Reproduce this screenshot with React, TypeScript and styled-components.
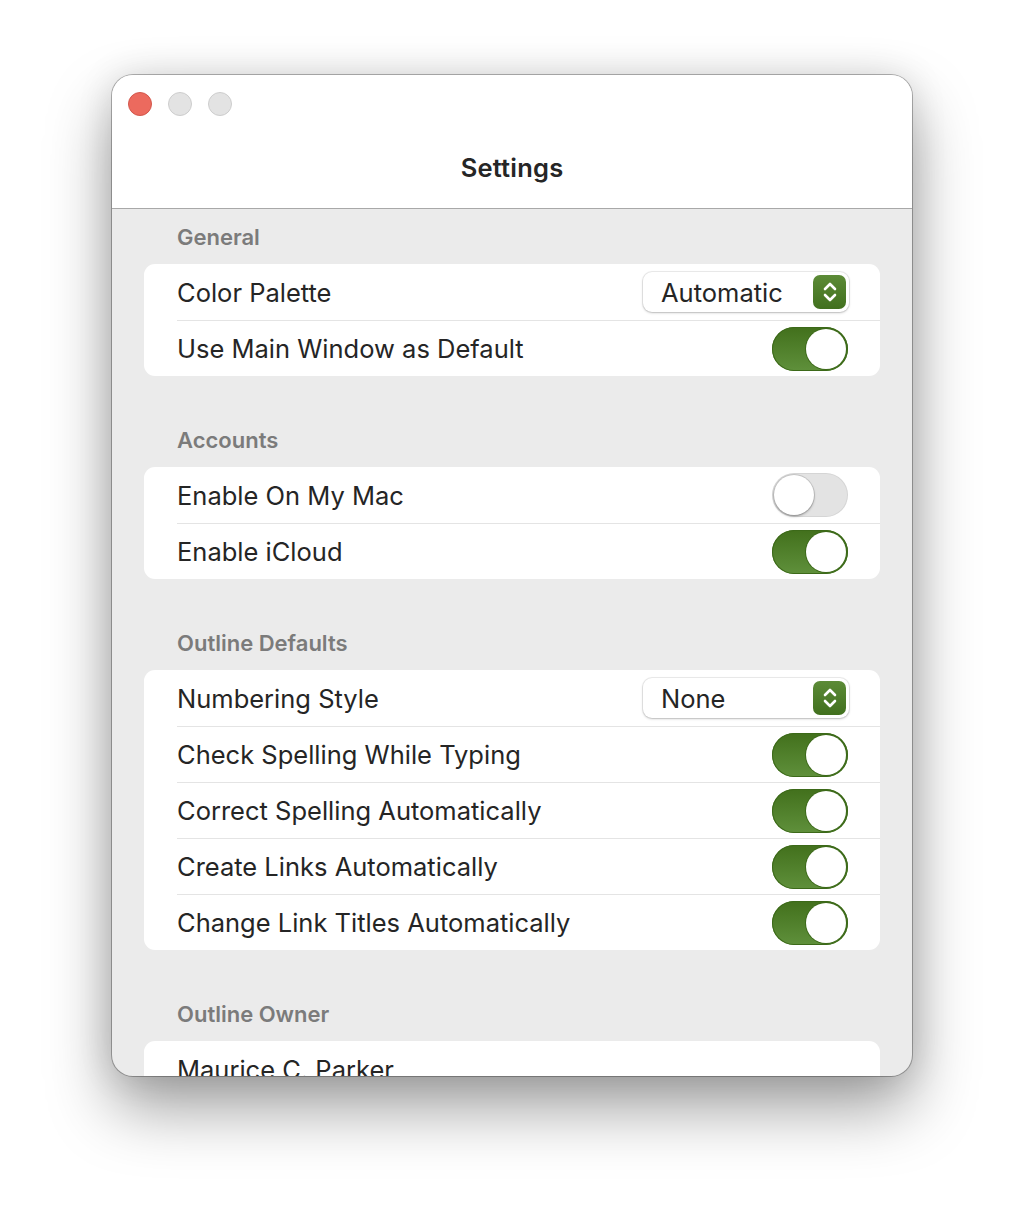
import React from "react";
import styled, { createGlobalStyle } from "styled-components";

const Global = createGlobalStyle`
  html, body { margin: 0; padding: 0; background: #ffffff; }
  body { font-family: Inter, "Noto Sans", "Liberation Sans", sans-serif; -webkit-font-smoothing: antialiased; }
  * { box-sizing: border-box; }
`;

const Page = styled.div`
  width: 1024px;
  height: 1224px;
  padding: 75px 112px 0;
  background: #ffffff;
`;

const Window = styled.div`
  width: 800px;
  height: 1001px;
  border-radius: 21px;
  overflow: hidden;
  background: #ebebeb;
  display: flex;
  flex-direction: column;
  box-shadow: 0 0 0 1px rgba(0, 0, 0, 0.28), 0 32px 64px rgba(0, 0, 0, 0.38),
    0 0 36px rgba(0, 0, 0, 0.12);
`;

const TitleBar = styled.div`
  height: 134px;
  flex: none;
  background: #ffffff;
  border-bottom: 1px solid #a8a8a8;
  display: flex;
  flex-direction: column;
`;

const Lights = styled.div`
  display: flex;
  gap: 16px;
  padding: 17px 0 0 16px;
`;

const Light = styled.span<{ $color: string; $border: string }>`
  width: 24px;
  height: 24px;
  border-radius: 50%;
  background: ${(p) => p.$color};
  border: 1px solid ${(p) => p.$border};
`;

const Title = styled.div`
  margin-top: 36px;
  text-align: center;
  font-size: 25.5px;
  font-weight: 600;
  color: #262626;
  letter-spacing: 0.2px;
`;

const Content = styled.div`
  flex: 1;
  overflow: hidden;
  padding: 0 32px;
  display: flex;
  flex-direction: column;
  gap: 36px;
`;

const Section = styled.section`
  display: flex;
  flex-direction: column;
`;

const SectionHeader = styled.div`
  padding: 15px 0 14px 33px;
  line-height: 26px;
  font-size: 22px;
  font-weight: 600;
  color: #7b7b7b;
`;

const Card = styled.div`
  background: #ffffff;
  border-radius: 11px;
  display: flex;
  flex-direction: column;
  padding-left: 33px;
`;

const Row = styled.div`
  height: 56px;
  display: flex;
  align-items: center;
  justify-content: space-between;
  padding-right: 32px;
  & + & {
    border-top: 1px solid #e4e4e4;
  }
`;

const Label = styled.span`
  font-size: 25.5px;
  color: #252525;
  font-weight: 400;
`;

const Popup = styled.div`
  width: 206px;
  height: 40px;
  margin-right: -1px;
  border-radius: 9px;
  background: #ffffff;
  box-shadow: 0 0 0 1px rgba(0, 0, 0, 0.07), 0 1px 2.5px rgba(0, 0, 0, 0.22);
  display: flex;
  align-items: center;
  justify-content: space-between;
  padding: 0 3px 0 18px;
  font-size: 25.5px;
  color: #252525;
`;

const Stepper = styled.span`
  width: 33px;
  height: 34px;
  border-radius: 7px;
  background: linear-gradient(180deg, #5c8b37 0%, #41701e 100%);
  display: flex;
  align-items: center;
  justify-content: center;
`;

const Track = styled.span<{ $on: boolean }>`
  width: 76px;
  height: 44px;
  border-radius: 22px;
  display: flex;
  align-items: center;
  justify-content: ${(p) => (p.$on ? "flex-end" : "flex-start")};
  padding: 0 2px;
  background: ${(p) =>
    p.$on ? "linear-gradient(180deg, #42701c 0%, #5f903b 100%)" : "#e3e3e3"};
  box-shadow: ${(p) =>
    p.$on ? "inset 0 0 0 1px #3c6919" : "inset 0 0 0 1px rgba(0,0,0,0.06)"};
`;

const Knob = styled.span<{ $on: boolean }>`
  width: 40px;
  height: 40px;
  border-radius: 50%;
  background: #ffffff;
  box-shadow: ${(p) =>
    p.$on
      ? "0 0 0 1px #3c6919"
      : "0 0 0 1px rgba(0,0,0,0.12), 0 1.5px 2.5px rgba(0,0,0,0.28)"};
`;

const Toggle = ({ on }: { on: boolean }) => (
  <Track $on={on}>
    <Knob $on={on} />
  </Track>
);

const Chevrons = () => (
  <svg width="18" height="26" viewBox="0 0 18 26" fill="none">
    <path d="M4 10 L9 5 L14 10" stroke="#fff" strokeWidth="2.6" strokeLinecap="round" strokeLinejoin="round" />
    <path d="M4 16 L9 21 L14 16" stroke="#fff" strokeWidth="2.6" strokeLinecap="round" strokeLinejoin="round" />
  </svg>
);

const PopupButton = ({ value }: { value: string }) => (
  <Popup>
    <span>{value}</span>
    <Stepper>
      <Chevrons />
    </Stepper>
  </Popup>
);

type Item = { label: string; popup?: string; toggle?: boolean };

const sections: { title: string; items: Item[] }[] = [
  {
    title: "General",
    items: [
      { label: "Color Palette", popup: "Automatic" },
      { label: "Use Main Window as Default", toggle: true },
    ],
  },
  {
    title: "Accounts",
    items: [
      { label: "Enable On My Mac", toggle: false },
      { label: "Enable iCloud", toggle: true },
    ],
  },
  {
    title: "Outline Defaults",
    items: [
      { label: "Numbering Style", popup: "None" },
      { label: "Check Spelling While Typing", toggle: true },
      { label: "Correct Spelling Automatically", toggle: true },
      { label: "Create Links Automatically", toggle: true },
      { label: "Change Link Titles Automatically", toggle: true },
    ],
  },
  {
    title: "Outline Owner",
    items: [{ label: "Maurice C. Parker" }],
  },
];

export default function App() {
  return (
    <>
      <Global />
      <Page>
        <Window>
          <TitleBar>
            <Lights>
              <Light $color="#ec6a5e" $border="#d2574c" />
              <Light $color="#e3e3e3" $border="#cdcdcd" />
              <Light $color="#e3e3e3" $border="#cdcdcd" />
            </Lights>
            <Title>Settings</Title>
          </TitleBar>
          <Content>
            {sections.map((s) => (
              <Section key={s.title}>
                <SectionHeader>{s.title}</SectionHeader>
                <Card>
                  {s.items.map((it) => (
                    <Row key={it.label}>
                      <Label>{it.label}</Label>
                      {it.popup !== undefined && <PopupButton value={it.popup} />}
                      {it.toggle !== undefined && <Toggle on={it.toggle} />}
                    </Row>
                  ))}
                </Card>
              </Section>
            ))}
          </Content>
        </Window>
      </Page>
    </>
  );
}
